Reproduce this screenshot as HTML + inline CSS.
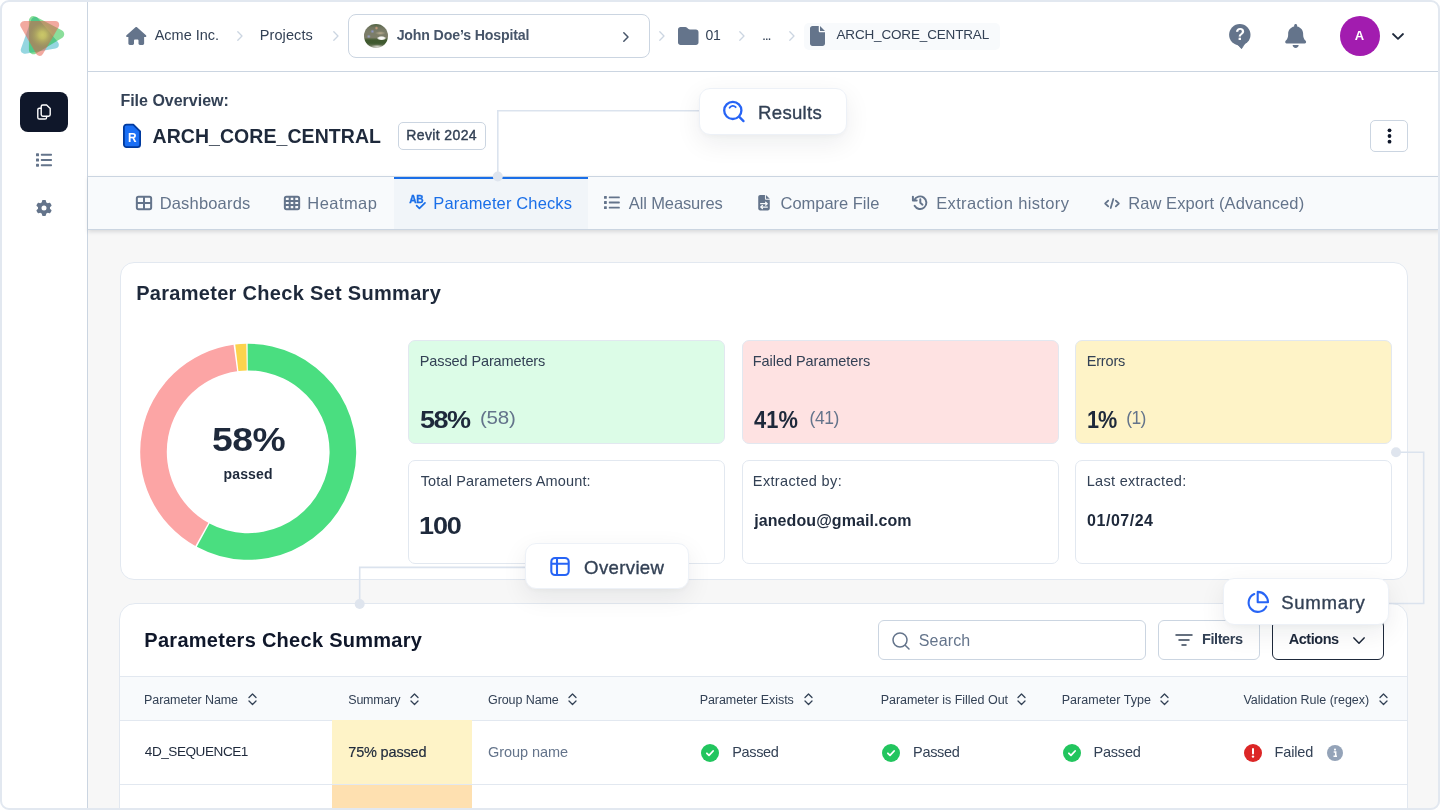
<!DOCTYPE html>
<html lang="en">
<head>
<meta charset="utf-8">
<title>File Overview - ARCH_CORE_CENTRAL</title>
<style>
*{box-sizing:border-box;margin:0;padding:0}
html,body{width:1440px;height:810px;overflow:hidden;background:#fff}
body{font-family:"Liberation Sans",Arial,sans-serif;color:#1e293b;position:relative}
#app{position:absolute;left:0;top:0;width:1440px;height:810px;background:#f7f7f7;overflow:hidden}
#fg{position:absolute;left:0;top:0;width:1440px;height:810px;will-change:transform}
#border{position:absolute;left:0;top:0;width:1440px;height:810px;border:2px solid #e2e8f0;border-radius:9px;box-shadow:0 0 0 20px #fff;z-index:100;pointer-events:none}
.a{position:absolute}
.t{position:absolute;white-space:nowrap;line-height:20px;height:20px;margin-top:-10px}
.b{font-weight:700}
svg{position:absolute;overflow:visible}
.g{color:#64748b}
.d{color:#334155}
.k{color:#1e293b}
#side{left:0;top:0;width:88px;height:810px;background:#fff;border-right:1px solid #cbd5e1}
#top{left:88px;top:0;width:1352px;height:72px;background:#fff;border-bottom:1px solid #cbd5e1}
#head{left:88px;top:72px;width:1352px;height:105px;background:#fff}
.sc{width:317px;height:103.500px;border:1px solid #e2e8f0;border-radius:7px}
.pill{background:#fff;border-radius:11px;border:1px solid #edf1f7;box-shadow:0 8px 26px rgba(15,23,42,.075),0 2px 5px rgba(15,23,42,.03)}
.pt{font-size:18.600px;line-height:24px;height:24px;margin-top:-12px;-webkit-text-stroke:.35px #334155}
#tabs{left:88px;top:176px;width:1352px;height:54px;background:#f8fafc;border-top:1px solid #cbd5e1;border-bottom:1px solid #cbd5e1;box-shadow:0 2px 4px rgba(15,23,42,.13)}
</style>
</head>
<body>
<div id="app">
<div id="fg">
<!-- SIDEBAR -->
<div id="side" class="a"></div>
<!--SIDE-->
<svg style="left:12px;top:8px" width="60" height="56" viewBox="12 8 60 56">
<defs><radialGradient id="lg" cx="42.4" cy="35" r="12.5" gradientUnits="userSpaceOnUse"><stop offset="0" stop-color="#cdcb69" stop-opacity=".95"/><stop offset=".28" stop-color="#c8c566" stop-opacity=".85"/><stop offset="1" stop-color="#a8a458" stop-opacity="0"/></radialGradient></defs>
<g opacity=".5"><path d="M35 21 L24.800 49.800 L54.800 44.500Z" fill="#2dafc3" stroke="#2dafc3" stroke-width="8" stroke-linejoin="round"/></g>
<g opacity=".45"><path d="M33.400 20.600 L59.700 34.200 L33.400 49.800Z" fill="#00b821" stroke="#00b821" stroke-width="9" stroke-linejoin="round"/></g>
<g opacity=".5"><path d="M24.300 25 L55.200 25 L39.600 51.800Z" fill="#e75541" stroke="#e75541" stroke-width="8" stroke-linejoin="round"/></g>
<circle cx="42.400" cy="35" r="12.500" fill="url(#lg)"/>
</svg>
<div class="a" style="left:20px;top:92px;width:48px;height:40px;border-radius:8px;background:#0f172a"></div>
<svg style="left:36px;top:104px" width="16" height="16" viewBox="0 0 16 16" fill="none" stroke="#fff" stroke-width="1.4" stroke-linejoin="round" stroke-linecap="round">
<path d="M5.2 3.2 V2.6 A1.6 1.6 0 0 1 6.8 1 H10.6 L14.2 4.4 V10.6 A1.6 1.6 0 0 1 12.6 12.2 H6.8 A1.6 1.6 0 0 1 5.2 10.6 Z"/>
<path d="M5 4.2 H3.4 A1.6 1.6 0 0 0 1.8 5.8 V13.4 A1.6 1.6 0 0 0 3.4 15 H9 A1.6 1.6 0 0 0 10.6 13.4 V12.4"/>
</svg>
<svg style="left:36px;top:153px" width="16" height="14" viewBox="0 0 16 14" fill="#64748b">
<rect x="0" y="0.300" width="3" height="3" rx=".6"/><rect x="4.800" y=".8" width="11.200" height="2" rx=".7"/>
<rect x="0" y="5.500" width="3" height="3" rx=".6"/><rect x="4.800" y="6" width="11.200" height="2" rx=".7"/>
<rect x="0" y="10.700" width="3" height="3" rx=".6"/><rect x="4.800" y="11.200" width="11.200" height="2" rx=".7"/>
</svg>
<svg style="left:36px;top:200px" width="16" height="16" viewBox="0 0 512 512" fill="#64748b">
<path d="M495.9 166.600c3.200 8.700 .5 18.400-6.400 24.600l-43.300 39.400c1.100 8.300 1.700 16.800 1.700 25.400s-.6 17.100-1.700 25.400l43.300 39.400c6.900 6.200 9.600 15.900 6.400 24.600c-4.400 11.900-9.700 23.300-15.800 34.300l-4.700 8.100c-6.600 11-14 21.400-22.100 31.200c-5.900 7.200-15.700 9.600-24.500 6.800l-55.700-17.700c-13.400 10.300-28.200 18.900-44 25.400l-12.500 57.100c-2 9.100-9 16.300-18.200 17.800c-13.800 2.300-28 3.500-42.500 3.500s-28.700-1.200-42.500-3.500c-9.200-1.500-16.200-8.700-18.200-17.800l-12.500-57.100c-15.800-6.500-30.600-15.100-44-25.400L83.100 425.900c-8.800 2.800-18.600 .3-24.500-6.800c-8.100-9.800-15.500-20.200-22.100-31.200l-4.700-8.100c-6.100-11-11.400-22.400-15.800-34.300c-3.200-8.700-.5-18.400 6.400-24.600l43.300-39.400C64.600 273.100 64 264.600 64 256s.6-17.100 1.700-25.400L22.400 191.200c-6.900-6.200-9.600-15.900-6.400-24.600c4.400-11.900 9.700-23.300 15.800-34.300l4.700-8.100c6.600-11 14-21.400 22.100-31.200c5.900-7.200 15.700-9.600 24.500-6.800l55.700 17.700c13.400-10.300 28.200-18.900 44-25.400l12.500-57.100c2-9.100 9-16.300 18.200-17.800C227.300 1.200 241.500 0 256 0s28.700 1.200 42.500 3.500c9.200 1.500 16.200 8.700 18.200 17.800l12.500 57.100c15.800 6.500 30.600 15.100 44 25.400l55.700-17.700c8.800-2.800 18.600-.3 24.500 6.800c8.100 9.800 15.500 20.200 22.100 31.200l4.700 8.100c6.100 11 11.400 22.400 15.800 34.300zM256 336a80 80 0 1 0 0-160 80 80 0 1 0 0 160z"/>
</svg>
<!--/SIDE-->
<!-- TOPBAR -->
<div id="top" class="a"></div>
<!--TOP-->
<svg style="left:125.5px;top:26.5px" width="20.5" height="18" viewBox="0 0 576 512" fill="#64748b"><path d="M575.8 255.500c0 18-15 32.100-32 32.100h-32l.7 160.200c0 2.700-.2 5.400-.5 8.100V472c0 22.100-17.900 40-40 40H456c-1.100 0-2.200 0-3.300-.1c-1.400 .1-2.800 .1-4.200 .1H416 392c-22.100 0-40-17.900-40-40V448 384c0-17.700-14.300-32-32-32H256c-17.700 0-32 14.300-32 32v64 24c0 22.100-17.900 40-40 40H160 128.100c-1.500 0-3-.1-4.500-.2c-1.200 .1-2.400 .2-3.600 .2H104c-22.100 0-40-17.900-40-40V360c0-.9 0-1.900 .1-2.800V287.600H32c-18 0-32-14-32-32.100c0-9 3-17 10-24L266.400 8c7-7 15-8 22-8s15 2 21 7L564.800 231.500c8 7 12 15 11 24z"/></svg>
<span class="t d" id="t1" style="left:154.67px;top:35.2px;font-size:14.5px;letter-spacing:-0.006px">Acme Inc.</span>
<svg class="chv" style="left:237px;top:31px" width="6" height="10" viewBox="0 0 6 10" fill="none" stroke="#cbd5e1" stroke-width="1.3" stroke-linecap="round" stroke-linejoin="round"><path d="M.8 .8 L5 5 L.8 9.200"/></svg>
<span class="t d" id="t2" style="left:259.68px;top:35.2px;font-size:14.5px;letter-spacing:0.106px">Projects</span>
<svg class="chv" style="left:333px;top:31px" width="6" height="10" viewBox="0 0 6 10" fill="none" stroke="#cbd5e1" stroke-width="1.3" stroke-linecap="round" stroke-linejoin="round"><path d="M.8 .8 L5 5 L.8 9.200"/></svg>
<div class="a" style="left:348px;top:14px;width:302px;height:44px;border:1px solid #cbd5e1;border-radius:8px;background:#fff"></div>
<div class="a" style="left:363.700px;top:24px;width:24.200px;height:24px;border-radius:50%;background:radial-gradient(ellipse 20% 9% at 73% 59%,#fff 0,#f4f4f0 60%,rgba(255,255,255,0) 100%),radial-gradient(ellipse 22% 8% at 68% 38%,#b9ad90 0,rgba(185,173,144,0) 100%),radial-gradient(circle at 35% 31%,#8f97c8 0,rgba(143,151,200,0) 9%),radial-gradient(circle at 20% 52%,#9aa3cc 0,rgba(154,163,204,0) 9%),radial-gradient(circle at 52% 17%,#d9a27c 0,rgba(217,162,124,0) 8%),radial-gradient(ellipse 30% 10% at 55% 95%,#d8d8d0 0,rgba(216,216,208,0) 100%),linear-gradient(180deg,#4f6340 0,#70755f 14%,#7b7d69 30%,#7d7d69 56%,#41592f 67%,#3f5a30 80%,#6a7558 92%,#8a8d7c 100%)"></div>
<span class="t b" id="t3" style="left:396.66px;top:35.2px;font-size:14.2px;color:#475569;letter-spacing:-0.173px">John Doe’s Hospital</span>
<svg style="left:623px;top:31.500px" width="6" height="10" viewBox="0 0 6 10" fill="none" stroke="#475569" stroke-width="1.5" stroke-linecap="round" stroke-linejoin="round"><path d="M.8 .8 L5 5 L.8 9.200"/></svg>
<svg class="chv" style="left:659px;top:31px" width="6" height="10" viewBox="0 0 6 10" fill="none" stroke="#cbd5e1" stroke-width="1.3" stroke-linecap="round" stroke-linejoin="round"><path d="M.8 .8 L5 5 L.8 9.200"/></svg>
<svg style="left:677.500px;top:27px" width="20.500" height="18" viewBox="0 0 512 448" fill="#64748b"><path d="M64 448H448c35.300 0 64-28.700 64-64V128c0-35.300-28.700-64-64-64H298.500c-17 0-33.300-6.700-45.300-18.700L226.700 18.700C214.700 6.700 198.500 0 181.500 0H64C28.700 0 0 28.700 0 64V384c0 35.300 28.700 64 64 64z"/></svg>
<span class="t d" id="t4" style="left:705.60px;top:35.2px;font-size:14px;letter-spacing:-0.300px">01</span>
<svg class="chv" style="left:739px;top:31px" width="6" height="10" viewBox="0 0 6 10" fill="none" stroke="#cbd5e1" stroke-width="1.3" stroke-linecap="round" stroke-linejoin="round"><path d="M.8 .8 L5 5 L.8 9.200"/></svg>
<span class="t d" id="t5" style="left:762px;top:35.2px;font-size:14.5px;letter-spacing:-1.3px">...</span>
<svg class="chv" style="left:788.500px;top:31px" width="6" height="10" viewBox="0 0 6 10" fill="none" stroke="#cbd5e1" stroke-width="1.3" stroke-linecap="round" stroke-linejoin="round"><path d="M.8 .8 L5 5 L.8 9.200"/></svg>
<div class="a" style="left:804px;top:22.500px;width:196px;height:27px;border-radius:5px;background:#f8fafc"></div>
<svg style="left:810px;top:26px" width="15" height="20" viewBox="0 0 384 512" fill="#64748b"><path d="M0 64C0 28.700 28.700 0 64 0H224V128c0 17.700 14.300 32 32 32H384V448c0 35.300-28.700 64-64 64H64c-35.300 0-64-28.700-64-64V64zm384 64H256V0L384 128z"/></svg>
<span class="t d" id="t6" style="left:836.45px;top:35.2px;font-size:13.5px;letter-spacing:-0.156px">ARCH_CORE_CENTRAL</span>
<!-- right icons -->
<svg style="left:1229px;top:23.500px" width="21.500" height="24.500" viewBox="1229 23.5 21.5 24.5" fill="#64748b"><circle cx="1239.800" cy="34.300" r="10.700"/><path d="M1237.600 44 L1245 42.800 L1241.500 48.200Z" stroke="#64748b" stroke-width=".8" stroke-linejoin="round"/></svg>
<span class="t b" style="left:1235.300px;top:34.900px;font-size:16px;color:#fff">?</span>
<svg style="left:1285px;top:24px" width="21.300" height="24" viewBox="0 0 448 512" fill="#64748b"><path d="M224 0c-17.700 0-32 14.300-32 32V51.200C119 66 64 130.600 64 208v18.800c0 47-17.300 92.400-48.500 127.600l-7.400 8.300c-8.400 9.400-10.400 22.900-5.300 34.400S19.400 416 32 416H416c12.600 0 24-7.400 29.200-18.900s3.100-25-5.300-34.400l-7.400-8.300C401.300 319.200 384 273.900 384 226.800V208c0-77.400-55-142-128-156.800V32c0-17.700-14.300-32-32-32zm45.300 493.300c12-12 18.700-28.300 18.700-45.300H224 160c0 17 6.700 33.300 18.700 45.300s28.300 18.700 45.300 18.700s33.300-6.700 45.300-18.700z"/></svg>
<div class="a" style="left:1340px;top:16px;width:40px;height:40px;border-radius:50%;background:#a21caf"></div>
<span class="t b" style="left:1354.700px;top:36.300px;font-size:13px;color:#fff">A</span>
<svg style="left:1392px;top:32.500px" width="12" height="7" viewBox="0 0 12 7" fill="none" stroke="#1e293b" stroke-width="1.8" stroke-linecap="round" stroke-linejoin="round"><path d="M1 1 L6 5.800 L11 1"/></svg>
<!--/TOP-->
<!-- HEADER -->
<div id="head" class="a"></div>
<!--HEAD-->
<span class="t b d" id="h1" style="left:120.41px;top:100.500px;font-size:16px;letter-spacing:-0.004px">File Overview:</span>
<svg style="left:122px;top:123px" width="20" height="26" viewBox="122 123 20 26"><path d="M126.500 124.700 H133.300 L140.100 131.400 V144.500 A2.600 2.600 0 0 1 137.500 147.100 H126.500 A2.600 2.600 0 0 1 123.900 144.500 V127.300 A2.600 2.600 0 0 1 126.500 124.700Z" fill="#1a6ff5" stroke="#003a9e" stroke-width="1.800" stroke-linejoin="round"/></svg>
<span class="t b" style="left:127.600px;top:137.600px;font-size:13.500px;color:#fff;transform:scaleX(.88);transform-origin:0 50%">R</span>
<span class="t b k" id="h2" style="left:152.49px;top:135.7px;font-size:19.500px;line-height:24px;height:24px;margin-top:-12px;letter-spacing:0.060px">ARCH_CORE_CENTRAL</span>
<div class="a" style="left:398px;top:122px;width:88px;height:28px;border:1px solid #cbd5e1;border-radius:5px;background:#fff"></div>
<span class="t d" id="h3" style="left:406.27px;top:135.2px;font-size:14px;letter-spacing:0.378px;-webkit-text-stroke:.4px #334155">Revit 2024</span>
<div class="a" style="left:1370px;top:120px;width:38px;height:32px;border:1px solid #cbd5e1;border-radius:5px;background:#fff"></div>
<svg style="left:1386.500px;top:128px" width="5" height="16" viewBox="0 0 5 16" fill="#0f172a"><circle cx="2.500" cy="2.300" r="1.900"/><circle cx="2.500" cy="8" r="1.900"/><circle cx="2.500" cy="13.700" r="1.900"/></svg>
<!--/HEAD-->
<!-- TABS -->
<div id="tabs" class="a"></div>
<!--TABS-->
<div class="a" style="left:394px;top:176.600px;width:194px;height:52.400px;background:#f1f5f9;border-top:2.200px solid #1a6fe8"></div>
<!-- dashboards -->
<svg style="left:136px;top:196px" width="16" height="14" viewBox="0 0 16 14" fill="none" stroke="#64748b" stroke-width="2"><rect x=".85" y=".85" width="14.300" height="12.300" rx="1.600"/><path d="M8 1 V13 M1 7 H15"/></svg>
<span class="t g" id="b1" style="left:159.67px;top:202.6px;font-size:16.5px;letter-spacing:0.182px">Dashboards</span>
<!-- heatmap -->
<svg style="left:284px;top:196px" width="16" height="14" viewBox="0 0 16 14" fill="none" stroke="#64748b" stroke-width="2"><rect x=".85" y=".85" width="14.300" height="12.300" rx="1.600"/><path d="M5.700 1 V13 M10.300 1 V13 M1 5 H15 M1 9 H15"/></svg>
<span class="t g" id="b2" style="left:307.34px;top:202.6px;font-size:16.5px;letter-spacing:0.432px">Heatmap</span>
<!-- parameter checks -->
<svg style="left:409px;top:195px" width="18" height="16" viewBox="0 0 18 16"><text x=".3" y="8" font-family="Liberation Sans, Arial, sans-serif" font-weight="700" font-size="10.200" fill="#1a6fe8" letter-spacing="-.5" stroke="#1a6fe8" stroke-width=".3">AB</text><path d="M7.600 10.600 L10.400 13.400 L16 7.800" fill="none" stroke="#1a6fe8" stroke-width="1.700" stroke-linecap="round" stroke-linejoin="round"/></svg>
<span class="t" id="b3" style="left:433.29px;top:202.6px;font-size:16.5px;color:#1a6fe8;letter-spacing:0.140px">Parameter Checks</span>
<!-- all measures -->
<svg style="left:604px;top:196.300px" width="16" height="13" viewBox="0 0 16 13" fill="#64748b"><rect x="0" y="0" width="2.800" height="2.800" rx=".5"/><rect x="4.800" y=".5" width="11" height="1.800" rx=".6"/><rect x="0" y="5.100" width="2.800" height="2.800" rx=".5"/><rect x="4.800" y="5.600" width="11" height="1.800" rx=".6"/><rect x="0" y="10.200" width="2.800" height="2.800" rx=".5"/><rect x="4.800" y="10.700" width="11" height="1.800" rx=".6"/></svg>
<span class="t g" id="b4" style="left:628.87px;top:202.6px;font-size:16.5px;letter-spacing:-0.136px">All Measures</span>
<!-- compare file -->
<svg style="left:758px;top:195.300px" width="12" height="15.400" viewBox="0 0 384 512" fill="#64748b"><path d="M0 64C0 28.700 28.700 0 64 0H224V128c0 17.700 14.300 32 32 32H384V448c0 35.300-28.700 64-64 64H64c-35.300 0-64-28.700-64-64V64zm384 64H256V0L384 128z"/><g fill="none" stroke="#f8fafc" stroke-width="40" stroke-linecap="round" stroke-linejoin="round"><path d="M80 290 H300 M245 240 L300 290 L245 340"/><path d="M304 400 H84 M139 350 L84 400 L139 450"/></g></svg>
<span class="t g" id="b5" style="left:780.52px;top:202.6px;font-size:16.5px;letter-spacing:-0.019px">Compare File</span>
<!-- extraction history -->
<svg style="left:912px;top:195.300px" width="16" height="15" viewBox="0 0 16 15" fill="none" stroke="#64748b" stroke-width="1.950" stroke-linecap="round" stroke-linejoin="round"><path d="M2.300 5.200 A6.300 6.300 0 1 1 2.600 10.800"/><path d="M.9 1.600 V5.400 H4.700"/><path d="M8.300 4.200 V7.800 L10.500 9.700"/></svg>
<span class="t g" id="b6" style="left:936.15px;top:202.6px;font-size:16.5px;letter-spacing:0.368px">Extraction history</span>
<!-- raw export -->
<svg style="left:1104px;top:198px" width="16" height="11" viewBox="0 0 16 11" fill="none" stroke="#64748b" stroke-width="1.800" stroke-linecap="round" stroke-linejoin="round"><path d="M4.200 2.600 L1.200 5.500 L4.200 8.400 M11.800 2.600 L14.800 5.500 L11.800 8.400 M9.300 1 L6.700 10"/></svg>
<span class="t g" id="b7" style="left:1128.15px;top:202.6px;font-size:16.5px;letter-spacing:0.087px">Raw Export (Advanced)</span>
<!--/TABS-->
<!-- CONTENT -->
<!--CARD1-->
<div class="a" style="left:120px;top:262px;width:1288px;height:317.500px;border:1px solid #e2e8f0;border-radius:14px;background:#fff"></div>
<span class="t b k" id="c1" style="left:136.14px;top:292.50px;font-size:20px;line-height:24px;height:24px;margin-top:-12px;letter-spacing:0.301px">Parameter Check Set Summary</span>
<svg style="left:0;top:0" width="1440" height="810" viewBox="0 0 1440 810"><path d="M247.63 343.80 A108.0 108.0 0 1 1 196.83 546.80 L209.48 523.40 A81.4 81.4 0 1 0 247.77 370.40Z" fill="#4ade80"/><path d="M195.35 545.98 A108.0 108.0 0 0 1 233.54 344.80 L237.15 371.15 A81.4 81.4 0 0 0 208.36 522.79Z" fill="#fca5a5"/><path d="M235.23 344.58 A108.0 108.0 0 0 1 246.32 343.82 L246.78 370.41 A81.4 81.4 0 0 0 238.42 370.99Z" fill="#fcd34d"/></svg>
<span class="t b k" id="c2" style="left:211.92px;top:440px;font-size:32.400px;line-height:40px;height:40px;margin-top:-20px;transform:scaleX(1.15);transform-origin:0 50%;letter-spacing:-0.452px">58%</span>
<span class="t b k" id="c3" style="left:223.49px;top:474.00px;font-size:14px;letter-spacing:0.162px">passed</span>
<!-- stat cards -->
<div class="a sc" style="left:408px;top:340px;background:#dcfce7"></div>
<div class="a sc" style="left:741.500px;top:340px;background:#fee2e2"></div>
<div class="a sc" style="left:1075px;top:340px;background:#fef3c7"></div>
<div class="a sc" style="left:408px;top:460px;height:104px;background:#fff"></div>
<div class="a sc" style="left:741.500px;top:460px;height:104px;background:#fff"></div>
<div class="a sc" style="left:1075px;top:460px;height:104px;background:#fff"></div>
<span class="t d" id="s1" style="left:419.78px;top:360.80px;font-size:14.500px;letter-spacing:-0.110px">Passed Parameters</span>
<span class="t d" id="s2" style="left:752.80px;top:360.80px;font-size:14.500px;letter-spacing:-0.057px">Failed Parameters</span>
<span class="t d" id="s3" style="left:1086.71px;top:360.80px;font-size:14.500px;letter-spacing:-0.179px">Errors</span>
<span class="t b k" id="s4" style="left:420.04px;top:420px;font-size:23.500px;line-height:28px;height:28px;margin-top:-14px;transform:scaleX(1.15);transform-origin:0 50%;letter-spacing:-1.321px">58%</span>
<span class="t g" id="s5" style="left:479.88px;top:418px;font-size:18px;transform:scaleX(1.14);transform-origin:0 50%;letter-spacing:-0.191px">(58)</span>
<span class="t b k" id="s6" style="left:754.30px;top:420px;font-size:23.500px;line-height:28px;height:28px;margin-top:-14px;letter-spacing:0.059px;transform:scaleX(.93);transform-origin:0 50%">41%</span>
<span class="t g" id="s7" style="left:809.56px;top:418px;font-size:17.500px;letter-spacing:-0.425px">(41)</span>
<span class="t b k" id="s8" style="left:1086.76px;top:420px;font-size:23.500px;line-height:28px;height:28px;margin-top:-14px;letter-spacing:-1.200px;transform:scaleX(.92);transform-origin:0 50%">1%</span>
<span class="t g" id="s9" style="left:1126.31px;top:418px;font-size:17.500px;letter-spacing:-0.624px">(1)</span>
<span class="t d" id="s10" style="left:420.74px;top:480.70px;font-size:14.500px;letter-spacing:0.131px">Total Parameters Amount:</span>
<span class="t d" id="s11" style="left:752.86px;top:480.70px;font-size:14.500px;letter-spacing:0.348px">Extracted by:</span>
<span class="t d" id="s12" style="left:1086.65px;top:480.70px;font-size:14.500px;letter-spacing:0.316px">Last extracted:</span>
<span class="t b k" id="s13" style="left:419.40px;top:525.500px;font-size:23.500px;line-height:28px;height:28px;margin-top:-14px;transform:scaleX(1.15);transform-origin:0 50%;letter-spacing:-1.003px">100</span>
<span class="t b k" id="s14" style="left:754.22px;top:520.500px;font-size:16px;letter-spacing:0.082px">janedou@gmail.com</span>
<span class="t b k" id="s15" style="left:1087.12px;top:520.500px;font-size:16px;letter-spacing:0.516px">01/07/24</span>
<!--/CARD1-->
<!--CARD2-->
<div class="a" style="left:119px;top:603px;width:1289px;height:230px;border:1px solid #e2e8f0;border-radius:16px;background:#fff"></div>
<span class="t b k" id="p1" style="left:144.33px;top:640.20px;font-size:20px;line-height:24px;height:24px;margin-top:-12px;letter-spacing:0.276px;color:#0f172a">Parameters Check Summary</span>
<div class="a" style="left:877.500px;top:620px;width:268px;height:40px;border:1px solid #cbd5e1;border-radius:6px;background:#fff"></div>
<svg style="left:892px;top:631.500px" width="18" height="18" viewBox="0 0 18 18" fill="none" stroke="#64748b" stroke-width="1.500" stroke-linecap="round"><circle cx="8" cy="8" r="7"/><path d="M13.200 13.200 L17 17"/></svg>
<span class="t g" id="p2" style="left:918.81px;top:640.500px;font-size:16px;letter-spacing:0.141px">Search</span>
<div class="a" style="left:1158px;top:620px;width:101.500px;height:40px;border:1px solid #cbd5e1;border-radius:6px;background:#fff"></div>
<svg style="left:1175px;top:634px" width="18" height="12" viewBox="0 0 18 12" fill="none" stroke="#334155" stroke-width="1.500" stroke-linecap="round"><path d="M1 1 H17 M4 6 H14 M7 11 H11"/></svg>
<span class="t b d" id="p3" style="left:1202.00px;top:639px;font-size:14.500px;letter-spacing:-0.417px">Filters</span>
<div class="a" style="left:1272px;top:620px;width:112px;height:40px;border:1px solid #1e293b;border-radius:6px;background:#fff"></div>
<span class="t b k" id="p4" style="left:1288.73px;top:639px;font-size:14.500px;letter-spacing:-0.458px">Actions</span>
<svg style="left:1352.500px;top:636.500px" width="12" height="7.500" viewBox="0 0 12 7.500" fill="none" stroke="#1e293b" stroke-width="1.500" stroke-linecap="round" stroke-linejoin="round"><path d="M.9 .9 L6 6.300 L11.100 .9"/></svg>
<!-- table -->
<div class="a" style="left:120px;top:676px;width:1287px;height:44.500px;background:#f8fafc;border-top:1px solid #e2e8f0;border-bottom:1px solid #e2e8f0"></div>
<div class="a" style="left:332.200px;top:720px;width:139.800px;height:64px;background:#fef3c7"></div>
<div class="a" style="left:332.200px;top:784px;width:139.800px;height:30px;background:#fee0b0"></div>
<div class="a" style="left:120px;top:783.800px;width:1287px;height:1px;background:#e2e8f0"></div>
<span class="t d" id="q1" style="left:144.10px;top:699.500px;font-size:12.500px;letter-spacing:-0.096px">Parameter Name</span>
<svg style="left:247.5px;top:693px" width="9" height="13" viewBox="0 0 9 13" fill="none" stroke="#334155" stroke-width="1.300" stroke-linecap="round" stroke-linejoin="round"><path d="M1 4.500 L4.500 1 L8 4.500 M1 8 L4.500 11.500 L8 8"/></svg>
<span class="t d" id="q2" style="left:348.28px;top:699.500px;font-size:12.500px;letter-spacing:-0.218px">Summary</span>
<svg style="left:409.5px;top:693px" width="9" height="13" viewBox="0 0 9 13" fill="none" stroke="#334155" stroke-width="1.300" stroke-linecap="round" stroke-linejoin="round"><path d="M1 4.500 L4.500 1 L8 4.500 M1 8 L4.500 11.500 L8 8"/></svg>
<span class="t d" id="q3" style="left:488.02px;top:699.500px;font-size:12.500px;letter-spacing:-0.083px">Group Name</span>
<svg style="left:568px;top:693px" width="9" height="13" viewBox="0 0 9 13" fill="none" stroke="#334155" stroke-width="1.300" stroke-linecap="round" stroke-linejoin="round"><path d="M1 4.500 L4.500 1 L8 4.500 M1 8 L4.500 11.500 L8 8"/></svg>
<span class="t d" id="q4" style="left:699.65px;top:699.500px;font-size:12.500px;letter-spacing:-0.065px">Parameter Exists</span>
<svg style="left:803.5px;top:693px" width="9" height="13" viewBox="0 0 9 13" fill="none" stroke="#334155" stroke-width="1.300" stroke-linecap="round" stroke-linejoin="round"><path d="M1 4.500 L4.500 1 L8 4.500 M1 8 L4.500 11.500 L8 8"/></svg>
<span class="t d" id="q5" style="left:880.65px;top:699.500px;font-size:12.500px;letter-spacing:-0.019px">Parameter is Filled Out</span>
<svg style="left:1016.5px;top:693px" width="9" height="13" viewBox="0 0 9 13" fill="none" stroke="#334155" stroke-width="1.300" stroke-linecap="round" stroke-linejoin="round"><path d="M1 4.500 L4.500 1 L8 4.500 M1 8 L4.500 11.500 L8 8"/></svg>
<span class="t d" id="q6" style="left:1061.65px;top:699.500px;font-size:12.500px;letter-spacing:0.050px">Parameter Type</span>
<svg style="left:1159.5px;top:693px" width="9" height="13" viewBox="0 0 9 13" fill="none" stroke="#334155" stroke-width="1.300" stroke-linecap="round" stroke-linejoin="round"><path d="M1 4.500 L4.500 1 L8 4.500 M1 8 L4.500 11.500 L8 8"/></svg>
<span class="t d" id="q7" style="left:1243.44px;top:699.500px;font-size:12.500px;letter-spacing:-0.024px">Validation Rule (regex)</span>
<svg style="left:1378.5px;top:693px" width="9" height="13" viewBox="0 0 9 13" fill="none" stroke="#334155" stroke-width="1.300" stroke-linecap="round" stroke-linejoin="round"><path d="M1 4.500 L4.500 1 L8 4.500 M1 8 L4.500 11.500 L8 8"/></svg>
<span class="t k" id="r1" style="left:144.87px;top:752.00px;font-size:13.6px;letter-spacing:-0.480px">4D_SEQUENCE1</span>
<span class="t k" id="r2" style="left:348.31px;top:752.00px;font-size:14.500px;-webkit-text-stroke:.2px #1e293b;letter-spacing:-0.183px">75% passed</span>
<span class="t g" id="r3" style="left:487.94px;top:752.00px;font-size:14.500px;letter-spacing:-0.047px">Group name</span>
<svg style="left:701px;top:743.500px" width="18" height="18" viewBox="0 0 18 18"><circle cx="9" cy="9" r="9" fill="#22c55e"/><path d="M5.900 9.300 L8 11.300 L12.100 7" fill="none" stroke="#fff" stroke-width="1.800" stroke-linecap="round" stroke-linejoin="round"/></svg>
<span class="t d" id="r4" style="left:732.28px;top:752.00px;font-size:14.500px;letter-spacing:-0.353px">Passed</span>
<svg style="left:882px;top:743.500px" width="18" height="18" viewBox="0 0 18 18"><circle cx="9" cy="9" r="9" fill="#22c55e"/><path d="M5.900 9.300 L8 11.300 L12.100 7" fill="none" stroke="#fff" stroke-width="1.800" stroke-linecap="round" stroke-linejoin="round"/></svg>
<span class="t d" id="r5" style="left:913.11px;top:752.00px;font-size:14.500px;letter-spacing:-0.341px">Passed</span>
<svg style="left:1063px;top:743.500px" width="18" height="18" viewBox="0 0 18 18"><circle cx="9" cy="9" r="9" fill="#22c55e"/><path d="M5.900 9.300 L8 11.300 L12.100 7" fill="none" stroke="#fff" stroke-width="1.800" stroke-linecap="round" stroke-linejoin="round"/></svg>
<span class="t d" id="r6" style="left:1093.57px;top:752.00px;font-size:14.500px;letter-spacing:-0.229px">Passed</span>
<svg style="left:1244px;top:743.500px" width="18" height="18" viewBox="0 0 18 18"><circle cx="9" cy="9" r="9" fill="#dc2626"/><path d="M9 5 V9.400" stroke="#fff" stroke-width="2" stroke-linecap="round"/><circle cx="9" cy="12.600" r="1.200" fill="#fff"/></svg>
<span class="t d" id="r7" style="left:1274.57px;top:752.00px;font-size:14.500px;letter-spacing:-0.146px">Failed</span>
<svg style="left:1327px;top:744.500px" width="16" height="16" viewBox="0 0 16 16"><circle cx="8" cy="8" r="8" fill="#94a3b8"/><path d="M6.700 7 H8.700 V11.200 M6.500 11.300 H10" stroke="#fff" stroke-width="1.500" fill="none"/><circle cx="8" cy="4.600" r="1.050" fill="#fff"/></svg>
<!--/CARD2-->
<!-- ANNOTATIONS -->
<!--ANN-->
<svg style="left:0;top:0" width="1440" height="810" viewBox="0 0 1440 810" fill="none" stroke="#dbe3ee" stroke-width="1.600">
<path d="M699 110.700 H497.800 V176"/><path d="M525 567.400 H359.700 V604"/><path d="M1396 452.200 H1423.700 V603.500 H1388"/>
<g fill="#dfe5ee" stroke="none"><circle cx="497.800" cy="176.500" r="5"/><circle cx="359.700" cy="604" r="5"/><circle cx="1396" cy="452.200" r="5"/></g></svg>
<div class="a pill" style="left:699px;top:88.400px;width:148.200px;height:46.700px"></div>
<svg style="left:722px;top:100px" width="23" height="23" viewBox="722 100 23 23" fill="none" stroke="#2764f5" stroke-width="2.300" stroke-linecap="round"><circle cx="732.800" cy="110.400" r="8.600"/><path d="M739.300 116.900 L743.500 121.100"/><path d="M729.600 107.800 A3.800 3.800 0 0 1 735.700 107.200" stroke-width="1.800"/></svg>
<span class="t d pt" id="a1" style="left:758.06px;top:112.500px;letter-spacing:0.289px">Results</span>
<div class="a pill" style="left:525.200px;top:542.700px;width:164px;height:46.800px"></div>
<svg style="left:549px;top:556px" width="22" height="21" viewBox="549 556 22 21" fill="none" stroke="#2764f5" stroke-width="2.100" stroke-linejoin="round"><rect x="551.300" y="558" width="17.400" height="17" rx="3.800"/><path d="M551.300 563.700 H568.700 M557 558 V575"/></svg>
<span class="t d pt" id="a2" style="left:584.09px;top:567.500px;letter-spacing:0.343px">Overview</span>
<div class="a pill" style="left:1222.600px;top:577.900px;width:166px;height:46.900px"></div>
<svg style="left:1246px;top:590px" width="24" height="24" viewBox="1246 590 24 24" fill="none" stroke="#2764f5" stroke-width="2.100" stroke-linecap="round" stroke-linejoin="round"><path d="M1266.300 606.600 A9.300 9.300 0 1 1 1254.300 594"/><path d="M1257.700 591.900 A10.300 10.300 0 0 1 1268 602.200 H1257.700Z"/></svg>
<span class="t d pt" id="a3" style="left:1281.27px;top:602.500px;letter-spacing:0.680px">Summary</span>
<!--/ANN-->
</div>
</div>
<div id="border"></div>
</body>
</html>
